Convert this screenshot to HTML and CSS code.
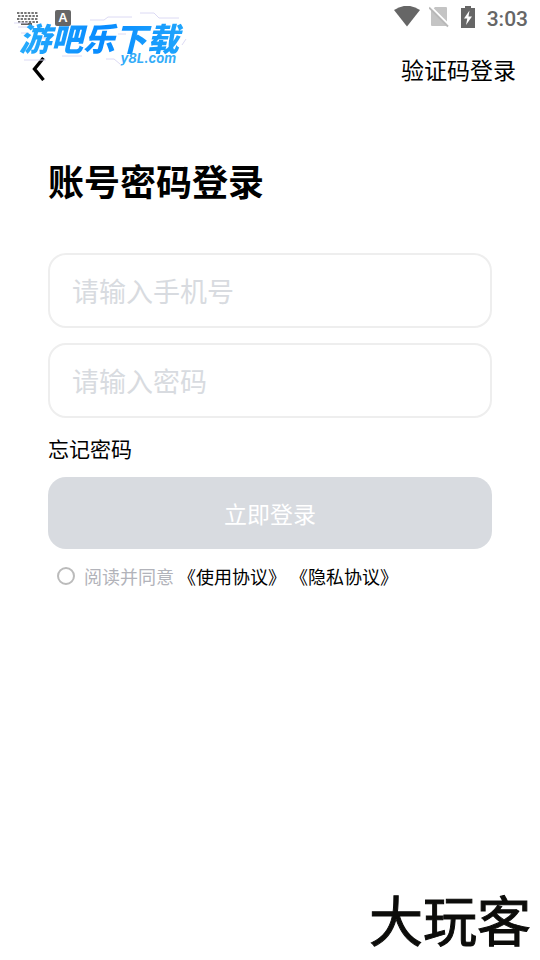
FILE: index.html
```html
<!DOCTYPE html>
<html lang="zh-CN">
<head>
<meta charset="utf-8">
<meta name="viewport" content="width=device-width, initial-scale=1">
<title>账号密码登录</title>
<link rel="stylesheet" href="styles.css">
</head>
<body>
<div class="screen">
  <div class="status">
    <svg class="keyboard" width="22" height="14" viewBox="0 0 22 14" aria-hidden="true">
      <path d="M1 2h21M2 5h20M1 8h21M2 11h20" stroke="#777" stroke-width="2" stroke-dasharray="2.4 1.2"/>
      <path d="M5 13h11" stroke="#666" stroke-width="2"/>
    </svg>
    <span class="lang">A</span>
    <div class="status-right">
      <svg width="26" height="22" viewBox="0 0 26 22" aria-hidden="true"><path d="M0 4Q13-4.500 26 4L13 20.500z" fill="#666"/></svg>
      <svg width="20" height="22" viewBox="0 0 20 22" aria-hidden="true">
        <path d="M6 1h11q1 0 1 1v18H3q-1 0-1-1V5z" fill="#c4c4c4"/>
        <path d="M1 0L20 19" stroke="#fff" stroke-width="2"/>
        <path d="M0 1.500L19 20.500" stroke="#b8b8b8" stroke-width="1.800"/>
      </svg>
      <svg width="14" height="22" viewBox="0 0 14 22" aria-hidden="true">
        <path d="M4 0h6v2h4v20H0V2h4z" fill="#666"/>
        <path d="M8.500 4.500L3 12.500h3.300L5 19l6-8.500H7.500z" fill="#fff"/>
      </svg>
      <time class="clock">3:03</time>
    </div>
  </div>

  <header class="bar">
    <button class="back" type="button" aria-label="返回">
      <svg width="14" height="24" viewBox="0 0 14 24"><path d="M11.500 1L2.500 12l9 11" fill="none" stroke="#000" stroke-width="3.400"/></svg>
    </button>
    <a class="switch" href="#code">验证码登录</a>
  </header>

  <main>
    <h1>账号密码登录</h1>
    <form>
      <input class="field" type="tel" placeholder="请输入手机号" aria-label="手机号">
      <input class="field" type="password" placeholder="请输入密码" aria-label="密码">
      <a class="forgot" href="#forgot">忘记密码</a>
      <button class="submit" type="button">立即登录</button>
      <div class="agree">
        <input class="tick" type="checkbox" id="agree">
        <p><label for="agree">阅读并同意</label> <a href="#terms">《使用协议》</a> <a href="#privacy">《隐私协议》</a></p>
      </div>
    </form>
  </main>

  <div class="mark-top">
    <svg class="streaks" width="176" height="60" viewBox="0 0 176 60" fill="none" stroke="#dcdaf4" aria-hidden="true">
      <path d="M0 14h14M4 18h12M7 24h8M76 11h14l4-3h24M126 4h14l5 5h20M48 47h20M10 51h22M92 50h8l6 5M168 36l4-6M104 25h8M22 29h12"/>
    </svg>
    <span class="mark-name">游吧乐下载</span>
    <span class="mark-site">y8L.com</span>
  </div>
  <div class="mark-bottom">大玩客</div>
</div>
</body>
</html>
```

FILE: styles.css
```css
* { box-sizing: border-box; }

body {
  margin: 0;
  background: #fff;
  color: #000;
  font-family: "Noto Sans CJK SC", sans-serif;
}

a { color: inherit; text-decoration: none; }
button { border: 0; padding: 0; font: inherit; cursor: pointer; }
svg { display: block; }

.screen {
  position: relative;
  min-height: 100vh;
}

.status {
  display: flex;
  align-items: center;
  height: 36px;
  padding: 0 12px 0 16px;
}

.lang {
  width: 16px;
  margin-left: 17px;
  border-radius: 2px;
  background: #666;
  color: #fff;
  font: bold 13px/16px "Liberation Sans", sans-serif;
  text-align: center;
}

.status-right {
  display: flex;
  align-items: center;
  margin-left: auto;
}

.status-right svg { margin: 0 9px 2px 0; }
.status-right svg:nth-of-type(2),
.status-right svg:nth-of-type(3) { margin-right: 12px; }

.clock {
  padding-top: 2px;
  color: #666;
  font: 500 21px/34px Roboto, sans-serif;
}

.bar {
  display: flex;
  align-items: center;
  justify-content: space-between;
  height: 66px;
  padding: 0 24px 0 32px;
}

.back { background: none; }
.switch { font-size: 23px; line-height: 34px; }

main { padding: 51px 48px 0; }

h1 {
  margin: 0 0 46px;
  font-size: 36px;
  font-weight: 700;
  line-height: 54px;
}

form { display: flex; flex-direction: column; }

.field {
  width: 100%;
  height: 75px;
  margin: 0 0 15px;
  padding: 0 22px;
  border: 2px solid #eee;
  border-radius: 18px;
  background: #fff;
  color: #000;
  font: 27px/40px "Noto Sans CJK SC", sans-serif;
}

.field::placeholder { color: #d8dbe0; opacity: 1; }

.forgot {
  align-self: flex-start;
  margin-bottom: 14px;
  font-size: 21px;
  line-height: 30px;
}

.submit {
  height: 72px;
  border-radius: 18px;
  background: #d8dbe0;
  color: #fff;
  font-size: 23px;
}

.agree {
  display: flex;
  align-items: center;
  gap: 9px;
  margin-top: 13px;
  padding-left: 9px;
  font-size: 18px;
  line-height: 28px;
}

.agree p { margin: 0; }
.agree label { color: #b2b3ba; }

.tick {
  appearance: none;
  width: 18px;
  height: 18px;
  margin: 0;
  border: 2px solid #bbb;
  border-radius: 50%;
}

.mark-top {
  position: absolute;
  top: 9px;
  left: 14px;
  width: 176px;
  pointer-events: none;
}

.streaks { position: absolute; top: 0; left: 0; }

.mark-name,
.mark-site {
  position: relative;
  display: block;
  font-style: italic;
}

.mark-name {
  padding-left: 5px;
  background: linear-gradient(90deg, #29aefc, #078bff 50%, #22a7fc);
  background-clip: text;
  color: transparent;
  font-size: 32px;
  font-weight: 900;
  line-height: 56px;
}

.mark-site {
  margin-top: -17px;
  padding-right: 14px;
  color: #35acf8;
  font-family: Inter, sans-serif;
  font-size: 13px;
  font-weight: 700;
  line-height: 20px;
  text-align: right;
}

.mark-bottom {
  position: absolute;
  right: 9px;
  bottom: 11px;
  color: #0c0c0a;
  font-size: 54px;
  font-weight: 400;
  line-height: 60px;
  -webkit-text-stroke: 1px #0c0c0a;
  pointer-events: none;
}
```
